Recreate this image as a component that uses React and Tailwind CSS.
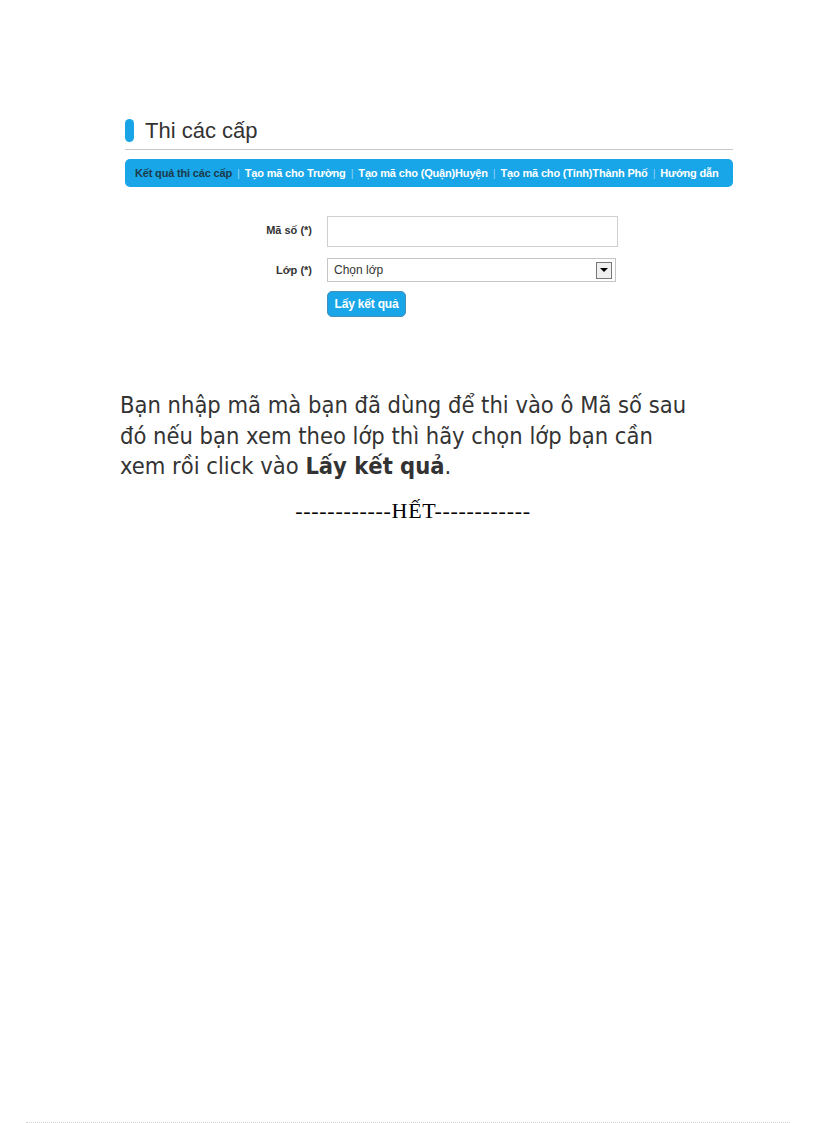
export default function App() {
  const tabs = [
    'Tạo mã cho Trường',
    'Tạo mã cho (Quận)Huyện',
    'Tạo mã cho (Tỉnh)Thành Phố',
    'Hướng dẫn',
  ];

  return (
    <div className="w-[816px] h-[1123px] bg-white relative overflow-hidden" style={{ fontFamily: '"Liberation Sans", Arial, sans-serif' }}>
      {/* Screenshot block */}
      <div className="ml-[125px] w-[608px] pt-[117px]">
        <div className="flex items-center h-[27px]">
          <div className="w-[9px] h-[23px] rounded-full bg-[#18a4e6]" />
          <span className="ml-[11px] text-[22px] leading-none text-[#333]">Thi các cấp</span>
        </div>
        <div className="mt-[5px] h-px bg-[#c8c8c8]" />
        <div className="mt-[9px] h-[28px] rounded-[5px] bg-[#18a6e8] flex items-center pl-[10px] text-[11px] font-bold tracking-[-0.17px]">
          <span className="text-[#1d3a4a]">Kết quả thi các cấp</span>
          {tabs.map((t) => (
            <span key={t} className="flex items-center">
              <span className="mx-[5px] text-[#8fd2f2] font-normal">|</span>
              <span className="text-white">{t}</span>
            </span>
          ))}
        </div>

        {/* Form */}
        <div className="mt-[29px] grid grid-cols-[187px_291px] gap-x-[15px] items-center">
          <div className="text-right text-[11px] font-bold text-[#333] self-start pt-[6px]">Mã số (*)</div>
          <div className="h-[31px] border border-[#cfcfcf]" />
          <div className="mt-[11px] text-right text-[11px] font-bold text-[#333]">Lớp (*)</div>
          <div className="mt-[11px] h-[24px] w-[289px] border border-[#c4c4c4] flex items-center justify-between pl-[6px] pr-[3px]">
            <span className="text-[12px] text-[#333]">Chọn lớp</span>
            <div className="w-[16px] h-[17px] border border-[#777] bg-[#f0f0f0] flex items-center justify-center">
              <div className="w-0 h-0 border-l-[4px] border-r-[4px] border-t-[4px] border-l-transparent border-r-transparent border-t-black" />
            </div>
          </div>
          <div />
          <div className="mt-[9px]">
            <button className="h-[26px] w-[79px] rounded-[5px] bg-[#18a6e8] border border-[#4a8fb8] text-white text-[12px] font-bold tracking-[-0.2px]">Lấy kết quả</button>
          </div>
        </div>
      </div>

      {/* Paragraph */}
      <p className="mt-[73px] ml-[120px] w-[575px] text-[23.5px] leading-[30.5px] text-[#333]" style={{ fontFamily: '"DejaVu Sans Condensed", "Liberation Sans", sans-serif' }}>
        Bạn nhập mã mà bạn đã dùng để thi vào ô Mã số sau đó nếu bạn xem theo lớp thì hãy chọn lớp bạn cần xem rồi click vào <b>Lấy kết quả</b>.
      </p>
      <div className="mt-[15px] pl-[10px] text-center text-[22px] tracking-[0.7px] leading-[28px] text-black" style={{ fontFamily: '"Liberation Serif", "Times New Roman", serif' }}>
        ------------HẾT------------
      </div>

      <div className="absolute left-[26px] right-[26px] bottom-0 border-b border-dotted border-[#d0d0d0]" />
    </div>
  );
}
